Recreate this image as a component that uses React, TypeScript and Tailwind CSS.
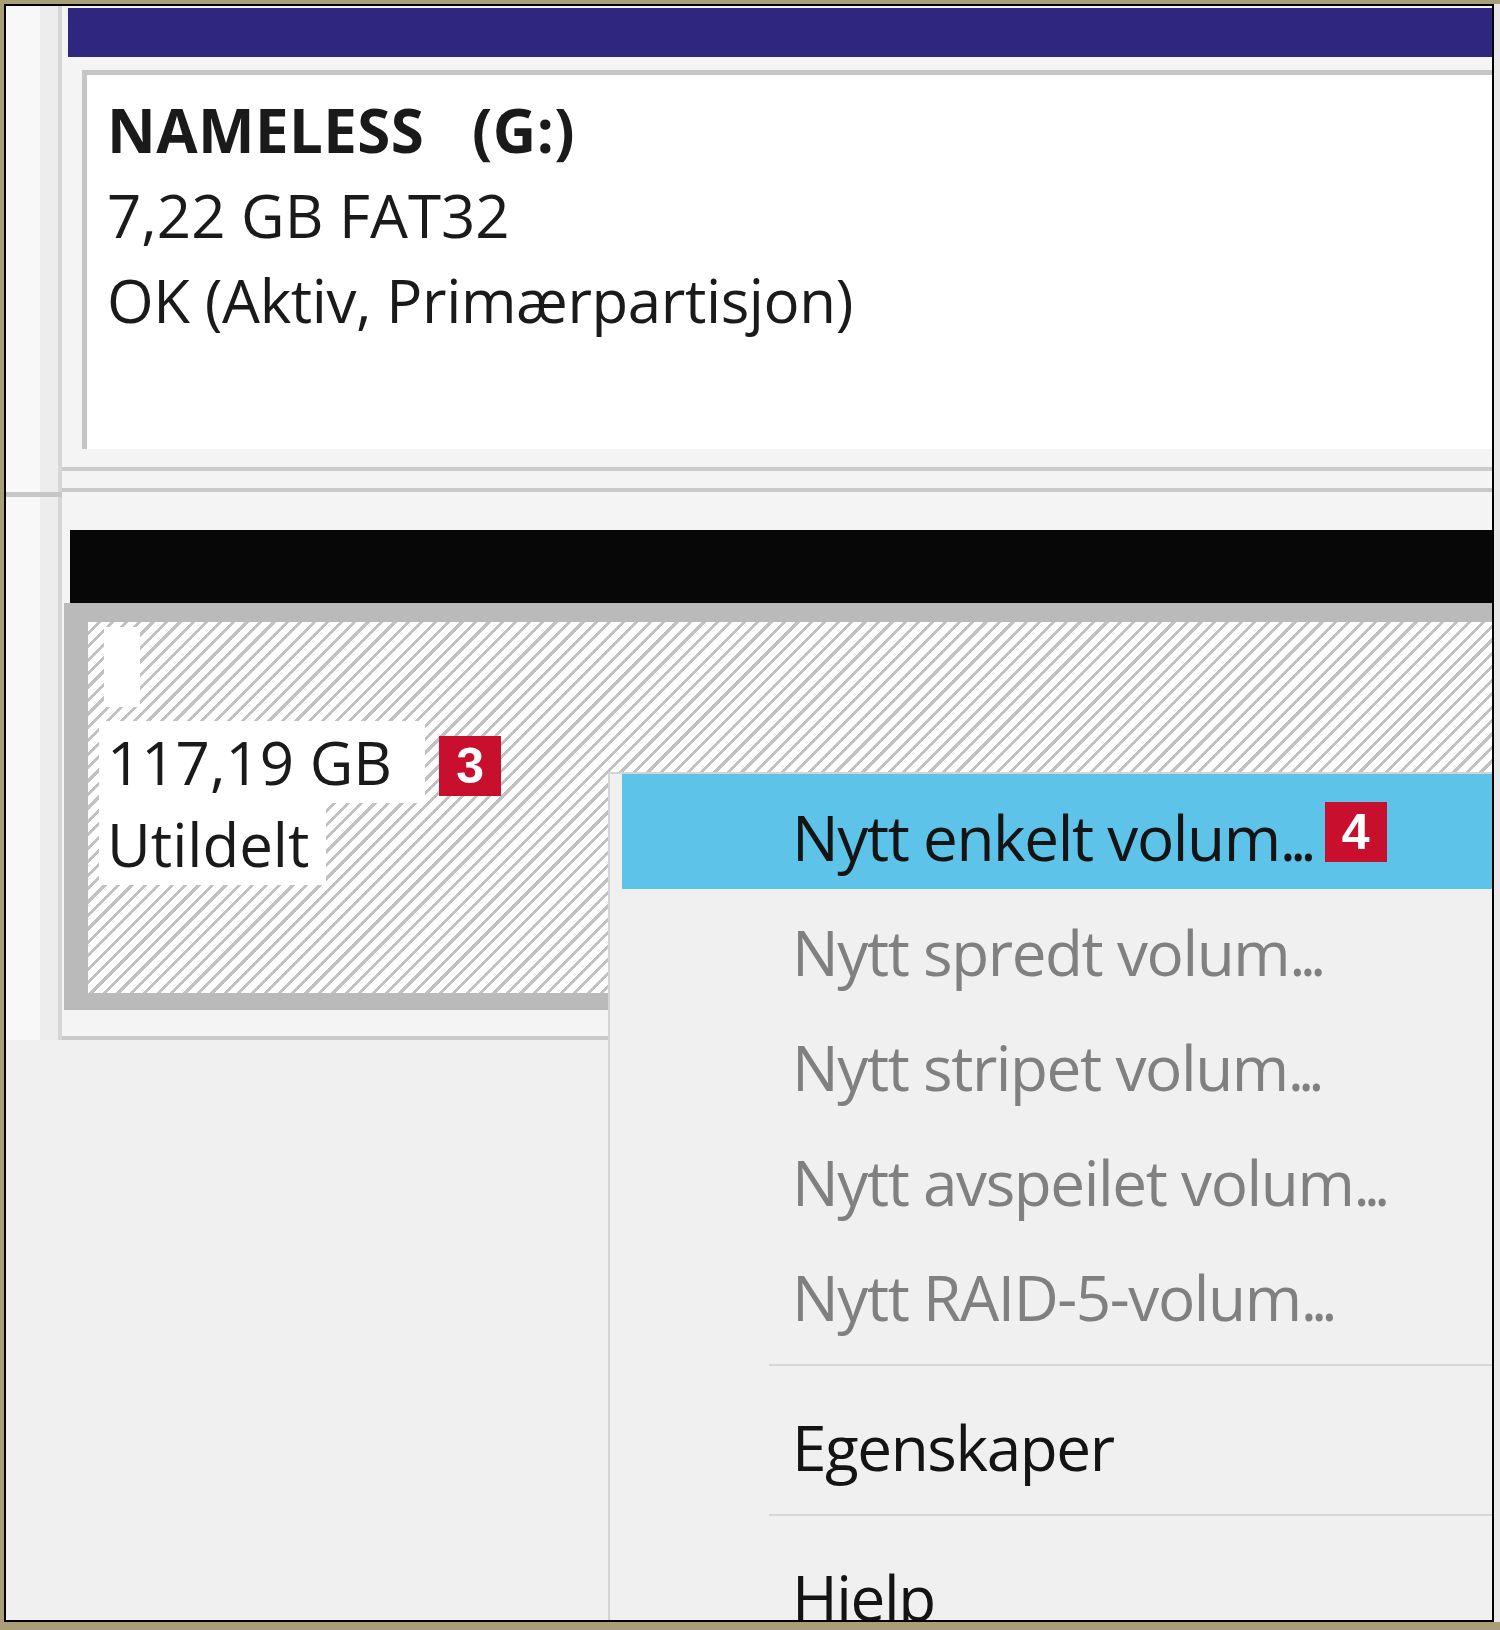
import React from "react";

function Badge({ n }: { n: string }) {
  return (
    <span className="inline-flex h-[60px] w-[62px] shrink-0 items-center justify-center bg-[#c8102e] font-['Liberation_Sans',sans-serif] text-[50px] font-bold leading-none text-white">
      {n}
    </span>
  );
}

function LeftCell({ divider }: { divider?: boolean }) {
  return (
    <div className={"flex w-[56px] shrink-0 " + (divider ? "border-t-[5px] border-[#c6c6c6]" : "")}>
      <div className="w-[34px] bg-[#f8f8f8]" />
      <div className="w-[18px] bg-[#ededed]" />
      <div className="w-[4px] bg-[#d6d6d6]" />
    </div>
  );
}

function MenuItem({
  label,
  active,
  disabled,
  badge,
}: {
  label: string;
  active?: boolean;
  disabled?: boolean;
  badge?: string;
}) {
  const color = disabled ? "text-[#808080]" : "text-[#141414]";
  return (
    <div className={"flex h-[115px] items-start pl-[170px] pt-[11px] " + (active ? "bg-[#5ec3e8]" : "")}>
      <span className={"whitespace-nowrap text-[62px] leading-[104px] tracking-[-1.4px] " + color}>
        {label}
        <span className="tracking-[-6px]">...</span>
      </span>
      {badge && (
        <span className="ml-[14px] mt-[17px]">
          <Badge n={badge} />
        </span>
      )}
    </div>
  );
}

function Separator() {
  return (
    <div className="pb-[18px] pt-[15px]">
      <div className="ml-[147px] h-[2px] bg-[#d6d6d6]" />
    </div>
  );
}

export default function App() {
  return (
    <div className="h-[1630px] w-[1500px] bg-[#a89e78] pl-[4px] pt-[4px] font-['Open_Sans',sans-serif]">
      <div className="flex h-[1618px]">
        <div className="h-[1618px] w-[1490px] border-2 border-black">
          <div className="relative h-full overflow-hidden bg-[#f0f0f0]">
            {/* disk row 1 */}
            <div className="flex h-[486px]">
              <LeftCell />
              <div className="flex-1 border-b-4 border-[#c9c9c9] bg-[#f4f4f4] pt-[2px]">
                <div className="ml-[6px] h-[49px] bg-[#2f2680]" />
                <div className="ml-[20px] mt-[13px] h-[379px] border-l-[5px] border-t-[5px] border-[#c6c6c6] bg-white pl-[20px] pt-[13px] text-[60px] leading-[85px] text-[#1a1a1a]">
                  <div className="whitespace-pre font-bold tracking-[0.4px]">NAMELESS   (G:)</div>
                  <div>7,22 GB FAT32</div>
                  <div className="tracking-[-0.4px]">OK (Aktiv, Primærpartisjon)</div>
                </div>
                <div className="mt-[18px] h-[4px] bg-[#cbcbcb]" />
              </div>
            </div>

            {/* disk row 2 */}
            <div className="flex h-[548px]">
              <LeftCell divider />
              <div className="flex-1 bg-[#f4f4f4] pt-[38px]">
                <div className="ml-[8px] h-[73px] bg-[#070707]" />
                <div className="ml-[2px] bg-[#bababa] pb-[17px] pl-[24px] pt-[19px]">
                  <div className="h-[371px] bg-[repeating-linear-gradient(135deg,#ffffff_0px,#ffffff_6.5px,#c2c2c2_6.5px,#c2c2c2_9.5px)] pt-[5px] text-[60px] leading-[82px] text-[#1a1a1a]">
                    <div className="ml-[16px] h-[80px] w-[36px] bg-white" />
                    <div className="mt-[14px] flex items-start">
                      <span className="ml-[11px] bg-white pl-[8px] pr-[33px]">117,19 GB</span>
                      <span className="ml-[14px] mt-[-2px]">
                        <Badge n="3" />
                      </span>
                    </div>
                    <div className="flex">
                      <span className="ml-[11px] bg-white pl-[8px] pr-[17px]">Utildelt</span>
                    </div>
                  </div>
                </div>
                <div className="mt-[26px] h-[4px] bg-[#c9c9c9]" />
              </div>
            </div>

            {/* context menu */}
            <div className="absolute bottom-0 left-[602px] right-0 top-[766px] border-l-2 border-t-2 border-[#d4d4d4] bg-[#f0f0f0] pl-[12px]">
              <MenuItem label="Nytt enkelt volum" active badge="4" />
              <MenuItem label="Nytt spredt volum" disabled />
              <MenuItem label="Nytt stripet volum" disabled />
              <MenuItem label="Nytt avspeilet volum" disabled />
              <MenuItem label="Nytt RAID-5-volum" disabled />
              <Separator />
              <div className="h-[115px] pl-[170px] pt-[11px] text-[62px] leading-[104px] tracking-[-1.4px] text-[#141414]">
                Egenskaper
              </div>
              <Separator />
              <div className="h-[115px] pl-[170px] pt-[11px] text-[62px] leading-[104px] tracking-[-1.4px] text-[#141414]">
                Hjelp
              </div>
            </div>
          </div>
        </div>
        <div className="h-[1618px] w-[6px] bg-[#e9e9e9]" />
      </div>
    </div>
  );
}
